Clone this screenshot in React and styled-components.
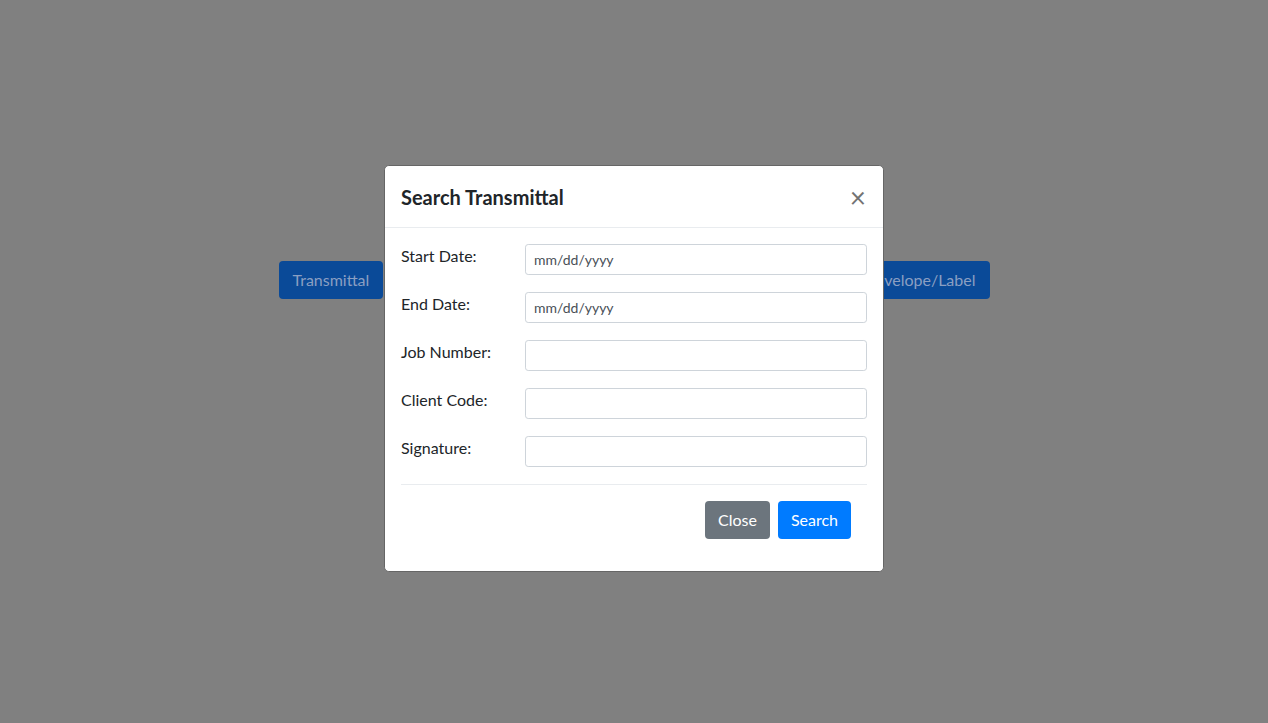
import React, { useState } from "react";
import styled, { createGlobalStyle } from "styled-components";

const GlobalStyle = createGlobalStyle`
  html, body {
    margin: 0;
    padding: 0;
    background: #808080;
    font-family: "Segoe UI", Lato, "Noto Sans", "Liberation Sans", sans-serif;
    font-size: 16px;
    line-height: 1.5;
    color: #212529;
  }
  * { box-sizing: border-box; }
`;

const Page = styled.div`
  height: 723px;
  display: flex;
  justify-content: center;
  padding-top: 261px;
`;

const ButtonRow = styled.div`
  width: 711px;
  height: 38px;
  display: flex;
  justify-content: space-between;
`;

const Btn = styled.button`
  font-family: inherit;
  font-size: 16px;
  line-height: 1.5;
  height: 38px;
  padding: 0 ${(p) => (p.$pad ? p.$pad : 12)}px;
  border: 1px solid transparent;
  border-radius: 4px;
  cursor: pointer;
  color: ${(p) => (p.$variant === "dim" ? "#8a9fc2" : "#fff")};
  background: ${(p) =>
    p.$variant === "secondary" ? "#6c757d" : p.$variant === "dim" ? "#0a4a98" : "#007bff"};
`;

// overlay layer; the page behind is already shown dimmed
const Overlay = styled.div`
  position: fixed;
  inset: 0;
  display: flex;
  justify-content: center;
  align-items: flex-start;
  padding-top: 165px;
`;

const Dialog = styled.div`
  width: 500px;
  background: #fff;
  border: 1px solid #666;
  border-radius: 4.8px;
  display: flex;
  flex-direction: column;
`;

const Header = styled.div`
  display: flex;
  align-items: center;
  justify-content: space-between;
  padding: 16px 16px 15px 16px;
  border-bottom: 1px solid #e9ecef;
`;

const Title = styled.h5`
  margin: 0;
  font-size: 20px;
  font-weight: 700;
  line-height: 30px;
  color: #212529;
`;

const CloseX = styled.button`
  background: none;
  border: 0;
  padding: 0;
  margin-right: 1px;
  font-family: inherit;
  font-size: 28px;
  font-weight: 400;
  line-height: 1;
  color: #000;
  opacity: 0.55;
  cursor: pointer;
`;

const Body = styled.div`
  padding: 16px;
`;

const Row = styled.div`
  display: flex;
  align-items: flex-start;
  margin-bottom: 17px;
`;

const Label = styled.label`
  width: 124px;
  flex: none;
  font-size: 16px;
  line-height: 24px;
  color: #212529;
`;

const Input = styled.input`
  flex: 1;
  height: 31px;
  padding: 4px 8px;
  font-family: inherit;
  font-size: 14px;
  line-height: 1.5;
  color: #495057;
  background: #fff;
  border: 1px solid #ced4da;
  border-radius: 3.2px;
  outline: none;
  &::placeholder {
    color: #495057;
    opacity: 1;
  }
`;

const Footer = styled.div`
  display: flex;
  justify-content: flex-end;
  gap: 8px;
  padding: 16px;
  border-top: 1px solid #e9ecef;
`;

const fields = [
  { id: "startDate", label: "Start Date:", placeholder: "mm/dd/yyyy" },
  { id: "endDate", label: "End Date:", placeholder: "mm/dd/yyyy" },
  { id: "jobNumber", label: "Job Number:" },
  { id: "clientCode", label: "Client Code:" },
  { id: "signature", label: "Signature:" },
];

export default function App() {
  const [state, setState] = useState({});

  const handleInput = (e) => {
    const { name, value } = e.currentTarget;
    setState((prev) => ({ ...prev, [name]: value }));
  };

  return (
    <>
      <GlobalStyle />
      <Page>
        <ButtonRow>
          <Btn $variant="dim" $pad={13}>Transmittal</Btn>
          <Btn $variant="dim" $pad={13}>Cover Sheet</Btn>
          <Btn $variant="dim" $pad={13}>Envelope/Label</Btn>
        </ButtonRow>
      </Page>
      <Overlay>
        <Dialog>
          <Header>
            <Title>Search Transmittal</Title>
            <CloseX aria-label="Close">×</CloseX>
          </Header>
          <Body>
            {fields.map((f) => (
              <Row key={f.id}>
                <Label htmlFor={f.id}>{f.label}</Label>
                <Input
                  id={f.id}
                  name={f.id}
                  type="text"
                  placeholder={f.placeholder || ""}
                  value={state[f.id] || ""}
                  onChange={handleInput}
                />
              </Row>
            ))}
            <Footer>
              <Btn $variant="secondary">Close</Btn>
              <Btn>Search</Btn>
            </Footer>
          </Body>
        </Dialog>
      </Overlay>
    </>
  );
}
